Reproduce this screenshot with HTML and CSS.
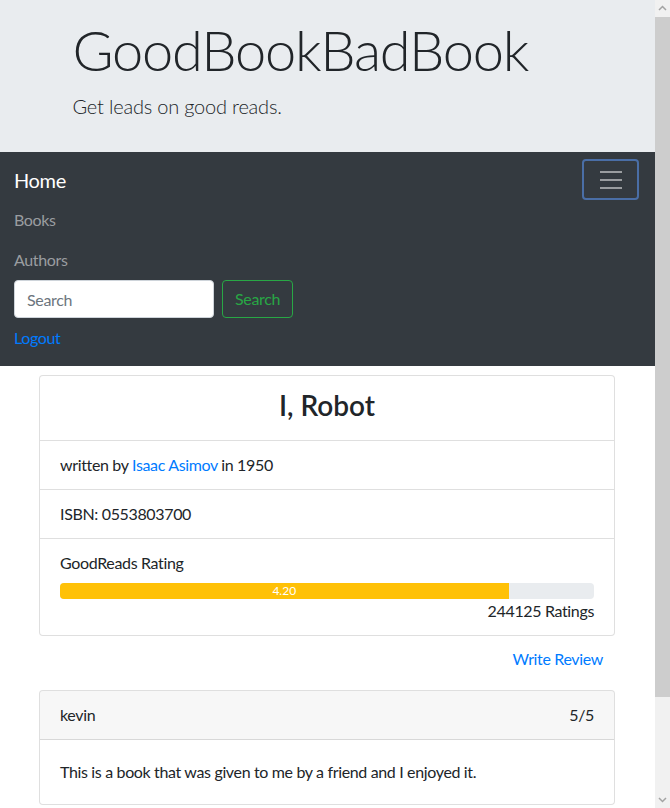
FILE: index.html
```html
<!DOCTYPE html>
<html lang="en">
<head>
<meta charset="utf-8">
<title>GoodBookBadBook</title>
<link rel="stylesheet" href="styles.css">
</head>
<body>
<div class="viewport">
  <div class="page">
    <header class="jumbotron">
      <div class="container">
        <h1 class="display">GoodBookBadBook</h1>
        <p class="lead">Get leads on good reads.</p>
      </div>
    </header>

    <nav class="navbar">
      <div class="navbar-top">
        <a class="brand" href="#">Home</a>
        <button class="toggler" type="button" aria-label="Toggle navigation">
          <svg viewBox="0 0 30 30" width="30" height="30"><path d="M4 7h22M4 15h22M4 23h22" stroke="rgba(255,255,255,0.5)" stroke-width="2" stroke-linecap="butt"/></svg>
        </button>
      </div>
      <ul class="nav-list">
        <li><a class="nav-link" href="#">Books</a></li>
        <li><a class="nav-link" href="#">Authors</a></li>
      </ul>
      <form class="search-form">
        <input class="search-input" type="search" placeholder="Search">
        <button class="btn-outline-success" type="button">Search</button>
      </form>
      <a class="nav-link logout" href="#">Logout</a>
    </nav>

    <main class="content">
      <section class="card">
        <div class="item item-title"><h3 class="book-title">I, Robot</h3></div>
        <div class="item">written by <a href="#">Isaac Asimov</a> in 1950</div>
        <div class="item">ISBN: 0553803700</div>
        <div class="item">
          <div>GoodReads Rating</div>
          <div class="progress"><div class="progress-bar" style="width:84%">4.20</div></div>
          <div class="count">244125 Ratings</div>
        </div>
      </section>

      <div class="actions"><a class="btn-link" href="#">Write Review</a></div>

      <section class="card">
        <div class="card-header"><span>kevin</span><span>5/5</span></div>
        <div class="card-body">This is a book that was given to me by a friend and I enjoyed it.</div>
      </section>
    </main>
  </div>

  <div class="scrollbar">
    <div class="sb-button"><svg viewBox="0 0 15 17" width="15" height="17"><path d="M4 10l3.5-3.5L11 10" fill="none" stroke="#a3a3a3" stroke-width="1.5"/></svg></div>
    <div class="sb-thumb"></div>
    <div class="sb-track"></div>
    <div class="sb-button"><svg viewBox="0 0 15 17" width="15" height="17"><path d="M4 7l3.5 3.5L11 7" fill="none" stroke="#a3a3a3" stroke-width="1.5"/></svg></div>
  </div>
</div>
</body>
</html>
```
FILE: styles.css
```css
* { box-sizing: border-box; }

html, body {
  margin: 0;
  height: 100%;
  overflow: hidden;
}

body {
  font-family: "Lato", "Liberation Sans", sans-serif;
  font-size: 16px;
  line-height: 1.5;
  color: #212529;
  letter-spacing: -0.35px;
  background: #fff;
}

a { color: #007bff; text-decoration: none; }

.viewport {
  display: flex;
  height: 808px;
}

.page {
  width: 655px;
  flex: none;
  overflow: hidden;
}

/* Jumbotron */
.jumbotron {
  background: #e9ecef;
  padding: 16px 0;
}
.container {
  width: 540px;
  margin: 0 auto;
  padding: 0 15px;
}
.display {
  margin: 0 0 8px;
  font-size: 56px;
  font-weight: 300;
  line-height: 1.2;
  letter-spacing: -1.25px;
}
.lead {
  margin: 0 0 15px;
  font-size: 20px;
  font-weight: 300;
  line-height: 30px;
  letter-spacing: -0.2px;
}

/* Navbar */
.navbar {
  background: #343a40;
  padding: 8px 16px 8px 14px;
  display: flex;
  flex-direction: column;
  align-items: flex-start;
}
.navbar-top {
  width: 100%;
  height: 40px;
  display: flex;
  justify-content: space-between;
  align-items: center;
}
.brand {
  color: #fff;
  font-size: 20px;
  line-height: 30px;
}
.toggler {
  width: 57px;
  height: 41px;
  margin-top: -1px;
  padding: 0;
  background: transparent;
  border: 2px solid #4a6ea6;
  border-radius: 4px;
  display: flex;
  align-items: center;
  justify-content: center;
}
.toggler svg { display: block; }

.nav-list {
  list-style: none;
  margin: 0;
  padding: 0;
}
.nav-link {
  display: block;
  padding: 8px 0;
  line-height: 24px;
  color: #9a9da0;
}
.search-form {
  display: flex;
  gap: 8px;
}
.search-input {
  width: 200px;
  height: 38px;
  padding: 6px 12px;
  font: inherit;
  letter-spacing: inherit;
  color: #495057;
  background: #fff;
  border: 1px solid #ced4da;
  border-radius: 4px;
}
.search-input::placeholder { color: #6c757d; }
.btn-outline-success {
  height: 38px;
  padding: 6px 12px;
  font: inherit;
  letter-spacing: inherit;
  color: #28a745;
  background: transparent;
  border: 1px solid #28a745;
  border-radius: 4px;
}
.nav-link.logout { color: #007bff; }

/* Content */
.content {
  padding: 9px 40px 0 39px;
}
.card {
  background: #fff;
  border: 1px solid rgba(0, 0, 0, 0.125);
  border-radius: 4px;
  overflow: hidden;
}
.item {
  padding: 12px 20px;
  line-height: 24px;
  border-bottom: 1px solid rgba(0, 0, 0, 0.125);
}
.item:last-child { border-bottom: 0; }
.item-title {
  text-align: center;
  padding-bottom: 18px;
}
.book-title {
  margin: 0;
  font-size: 28px;
  font-weight: 600;
  line-height: 34px;
  letter-spacing: 0;
}
.progress {
  margin-top: 8px;
  height: 16px;
  background: #e9ecef;
  border-radius: 4px;
  overflow: hidden;
  display: flex;
}
.progress-bar {
  background: #ffc107;
  color: #fff;
  font-size: 12px;
  line-height: 16px;
  text-align: center;
  letter-spacing: 0;
}
.count { text-align: right; }

.actions {
  margin: 5px 0 13px;
  display: flex;
  justify-content: flex-end;
}
.btn-link {
  padding: 6px 12px;
  line-height: 24px;
}

.card-header {
  display: flex;
  justify-content: space-between;
  padding: 12px 20px;
  line-height: 24px;
  background: rgba(0, 0, 0, 0.03);
  border-bottom: 1px solid rgba(0, 0, 0, 0.125);
}
.card-body {
  padding: 20px;
  line-height: 24px;
}

/* Scrollbar */
.scrollbar {
  width: 15px;
  flex: none;
  display: flex;
  flex-direction: column;
  background: #f1f1f1;
}
.sb-button { height: 17px; flex: none; }
.sb-button svg { display: block; }
.sb-thumb {
  height: 680px;
  flex: none;
  background: #cdcdcd;
}
.sb-track { flex: 1; }
```
